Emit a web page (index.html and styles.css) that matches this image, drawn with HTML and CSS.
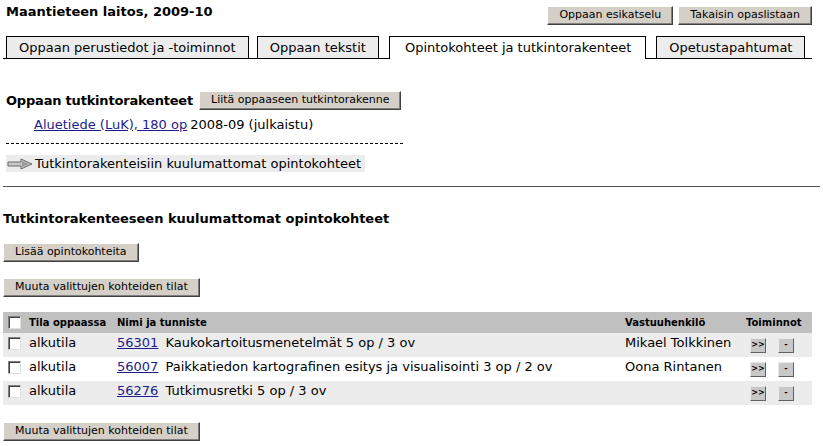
FILE: index.html
```html
<!DOCTYPE html>
<html lang="fi">
<head>
    <meta charset="UTF-8">
    <title>Maantieteen laitos, 2009-10</title>
    <link rel="stylesheet" href="styles.css">
</head>
<body>

    <div class="top">
        <h1>Maantieteen laitos, 2009-10</h1>
        <div class="top-buttons">
            <button class="btn">Oppaan esikatselu</button>
            <button class="btn">Takaisin opaslistaan</button>
        </div>
    </div>

    <div class="tabs">
        <span class="tab">Oppaan perustiedot ja -toiminnot</span>
        <span class="tab">Oppaan tekstit</span>
        <span class="tab active">Opintokohteet ja tutkintorakenteet</span>
        <span class="tab">Opetustapahtumat</span>
    </div>

    <div class="structures">
        <div class="structures-head">
            <h2>Oppaan tutkintorakenteet</h2>
            <button class="btn">Liitä oppaaseen tutkintorakenne</button>
        </div>
        <div class="structure-item">
            <a href="#">Aluetiede (LuK), 180 op</a>2008-09 (julkaistu)
        </div>
        <div class="dashed"></div>
        <div class="jump">
            <svg width="26" height="12" viewBox="0 0 26 12">
                <path d="M1 4 H14 V1 L25 6 L14 11 V8 H1 Z" fill="#c8c8c8" stroke="#6a6a6a" stroke-width="1"/>
                <path d="M15 3 L22 6 L15 9 Z" fill="#9a9a9a"/>
            </svg>
            Tutkintorakenteisiin kuulumattomat opintokohteet
        </div>
    </div>

    <hr class="divider">

    <h3>Tutkintorakenteeseen kuulumattomat opintokohteet</h3>
    <div class="actions">
        <button class="btn">Lisää opintokohteita</button>
        <button class="btn">Muuta valittujen kohteiden tilat</button>
    </div>

    <table class="courses">
        <thead>
            <tr>
                <th class="col-check"><span class="check"></span></th>
                <th class="col-state">Tila oppaassa</th>
                <th class="col-name">Nimi ja tunniste</th>
                <th class="col-person">Vastuuhenkilö</th>
                <th class="col-tools">Toiminnot</th>
            </tr>
        </thead>
        <tbody>
            <tr>
                <td class="col-check"><span class="check"></span></td>
                <td>alkutila</td>
                <td><a href="#">56301</a> Kaukokartoitusmenetelmät 5 op / 3 ov</td>
                <td>Mikael Tolkkinen</td>
                <td class="col-tools"><span class="mini">&gt;&gt;</span><span class="mini">-</span></td>
            </tr>
            <tr>
                <td class="col-check"><span class="check"></span></td>
                <td>alkutila</td>
                <td><a href="#">56007</a> Paikkatiedon kartografinen esitys ja visualisointi 3 op / 2 ov</td>
                <td>Oona Rintanen</td>
                <td class="col-tools"><span class="mini">&gt;&gt;</span><span class="mini">-</span></td>
            </tr>
            <tr>
                <td class="col-check"><span class="check"></span></td>
                <td>alkutila</td>
                <td><a href="#">56276</a> Tutkimusretki 5 op / 3 ov</td>
                <td></td>
                <td class="col-tools"><span class="mini">&gt;&gt;</span><span class="mini">-</span></td>
            </tr>
        </tbody>
    </table>

    <div class="bottom-actions">
        <button class="btn">Muuta valittujen kohteiden tilat</button>
    </div>

</body>
</html>
```

FILE: styles.css
```css
body {
    font-family: "DejaVu Sans", Verdana, sans-serif;
    font-size: 13px;
    color: #000;
    background: #fff;
    margin: 0;
    padding: 0 3px;
}
.top {
    display: flex;
    justify-content: space-between;
    align-items: flex-start;
    padding: 3px 8px 0 3px;
}
h1 {
    font-size: 13px;
    font-weight: bold;
    margin: 0;
    line-height: 17px;
}
.top-buttons {
    display: flex;
    gap: 5px;
    margin-top: 3px;
}
.btn {
    font-family: "DejaVu Sans", Verdana, sans-serif;
    font-size: 11px;
    color: #000;
    background: #d4d0c8;
    border: 1px solid;
    border-color: #ffffff #404040 #404040 #ffffff;
    box-shadow: inset -1px -1px 0 #808080;
    padding: 1px 11px 2px 11px;
    height: 19px;
    line-height: 14px;
    border-radius: 0;
}
.tabs {
    display: flex;
    gap: 8px;
    border-bottom: 1px solid #000;
    padding-left: 3px;
    margin: 11px 8px 0 0;
    height: 22px;
}
.tab {
    font-size: 13px;
    background: #ececec;
    border: 1px solid #000;
    border-bottom: none;
    padding: 0 12px;
    line-height: 21px;
}
.tab.active {
    background: #fff;
    height: 22px;
    padding: 0 14px 0 15px;
    margin: 0 2px;
}
.structures {
    padding: 32px 0 0 3px;
}
.structures-head {
    display: flex;
    align-items: center;
    gap: 6px;
}
h2 {
    font-size: 13px;
    font-weight: bold;
    letter-spacing: -0.2px;
    margin: 0;
}
.structure-item {
    padding: 7px 0 0 28px;
    line-height: 16px;
}
a {
    color: #1c1c8c;
    margin-right: 3px;
}
.dashed {
    width: 397px;
    border-top: 1px dashed #000;
    margin-top: 10px;
}
.jump {
    display: inline-flex;
    align-items: center;
    gap: 2px;
    background: #ececec;
    margin-top: 11px;
    padding: 1px 4px 0 1px;
    line-height: 16px;
}
.divider {
    border: none;
    border-top: 1px solid #555;
    margin: 13px 0 0 0;
}
h3 {
    font-size: 13px;
    font-weight: bold;
    margin: 24px 0 0 0;
}
.actions {
    display: flex;
    flex-direction: column;
    align-items: flex-start;
    gap: 16px;
    margin-top: 17px;
}
.courses {
    border-collapse: collapse;
    width: 809px;
    margin-top: 15px;
}
.courses th {
    background: #c0c0c0;
    font-size: 10px;
    font-weight: bold;
    text-align: left;
    height: 21px;
    padding: 0 2px;
}
.courses td {
    height: 22px;
    vertical-align: top;
    padding: 2px 2px 0 2px;
    line-height: 16px;
}
.courses tbody tr:nth-child(odd) td {
    background: #ececec;
}
.col-check {
    width: 20px;
}
.col-state {
    width: 84px;
}
.col-person {
    width: 118px;
}
.col-tools {
    width: 63px;
}
th.col-tools {
    padding-left: 1px;
}
.check {
    display: inline-block;
    width: 11px;
    height: 11px;
    background: #fff;
    border: 1px solid;
    border-color: #808080 #e0e0e0 #e0e0e0 #808080;
    box-shadow: inset 1px 1px 0 #404040;
    vertical-align: middle;
    margin-left: 3px;
}
.courses td .check {
    margin-top: 2px;
    vertical-align: top;
}
.mini {
    display: inline-block;
    vertical-align: top;
    width: 14px;
    height: 13px;
    background: #c8c8c8;
    border: 1px solid;
    border-color: #e8e8e8 #606060 #606060 #e8e8e8;
    font-size: 8px;
    font-weight: bold;
    text-align: center;
    line-height: 12px;
    margin: 3px 12px 0 3px;
}
.mini + .mini {
    margin: 3px 0 0 0;
}
.bottom-actions {
    margin-top: 17px;
}
```
